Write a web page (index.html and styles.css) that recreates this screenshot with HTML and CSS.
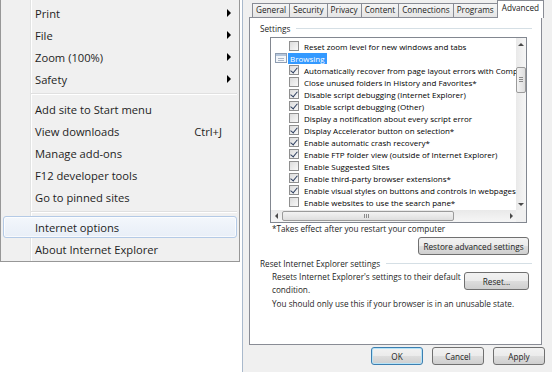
FILE: index.html
```html
<!DOCTYPE html>
<html lang="en">
<head>
  <meta charset="UTF-8" />
  <meta name="viewport" content="width=device-width, initial-scale=1.0" />
  <title>Internet Options</title>
  <link rel="stylesheet" href="styles.css">
</head>
<body>
  <div class="screen">
    <div class="menu-side">
      <ul class="menu">
        <li class="item sub">Print</li>
        <li class="item sub">File</li>
        <li class="item sub">Zoom (100%)</li>
        <li class="item sub">Safety</li>
        <li class="sep"></li>
        <li class="item">Add site to Start menu</li>
        <li class="item">View downloads <span class="key">Ctrl+J</span></li>
        <li class="item">Manage add-ons</li>
        <li class="item">F12 developer tools</li>
        <li class="item">Go to pinned sites</li>
        <li class="sep"></li>
        <li class="item hot">Internet options</li>
        <li class="item">About Internet Explorer</li>
      </ul>
    </div>

    <div class="dialog">
      <div class="tabs">
        <span class="tab">General</span>
        <span class="tab">Security</span>
        <span class="tab">Privacy</span>
        <span class="tab">Content</span>
        <span class="tab">Connections</span>
        <span class="tab">Programs</span>
        <span class="tab active">Advanced</span>
      </div>

      <div class="panel">
        <div class="group-title">Settings</div>

        <div class="listbox">
          <div class="rows">
            <div class="row"><span class="cb"></span>Reset zoom level for new windows and tabs</div>
            <div class="row cat">
              <svg class="cat-icon" width="12" height="10" viewBox="0 0 12 10">
                <rect x="0.5" y="0.5" width="11" height="9" fill="#f3f6fa" stroke="#8d9cb1"/>
                <rect x="1" y="1" width="10" height="2" fill="#b3c5db"/>
                <path d="M3 5.5h6M3 7.5h6" stroke="#a9b6c7"/>
              </svg>
              <span class="cat-label">Browsing</span>
            </div>
            <div class="row"><span class="cb on"></span>Automatically recover from page layout errors with Compa</div>
            <div class="row"><span class="cb"></span>Close unused folders in History and Favorites*</div>
            <div class="row"><span class="cb on"></span>Disable script debugging (Internet Explorer)</div>
            <div class="row"><span class="cb on"></span>Disable script debugging (Other)</div>
            <div class="row"><span class="cb"></span>Display a notification about every script error</div>
            <div class="row"><span class="cb on"></span>Display Accelerator button on selection*</div>
            <div class="row"><span class="cb on"></span>Enable automatic crash recovery*</div>
            <div class="row"><span class="cb on"></span>Enable FTP folder view (outside of Internet Explorer)</div>
            <div class="row"><span class="cb"></span>Enable Suggested Sites</div>
            <div class="row"><span class="cb on"></span>Enable third-party browser extensions*</div>
            <div class="row"><span class="cb on"></span>Enable visual styles on buttons and controls in webpages</div>
            <div class="row"><span class="cb"></span>Enable websites to use the search pane*</div>
          </div>
          <div class="vscroll">
            <span class="arrow up"></span>
            <span class="vthumb"></span>
            <span class="arrow down"></span>
          </div>
          <div class="hscroll">
            <span class="arrow left"></span>
            <span class="hthumb"></span>
            <span class="arrow right"></span>
          </div>
          <div class="corner"></div>
        </div>

        <p class="note">*Takes effect after you restart your computer</p>
        <div class="actions">
          <button class="btn restore">Restore advanced settings</button>
        </div>

        <div class="group-title reset-title">Reset Internet Explorer settings</div>
        <div class="reset-row">
          <p>Resets Internet Explorer's settings to their default<br>condition.</p>
          <button class="btn reset">Reset...</button>
        </div>
        <p class="note warn">You should only use this if your browser is in an unusable state.</p>
      </div>

      <div class="buttons">
        <button class="btn default">OK</button>
        <button class="btn">Cancel</button>
        <button class="btn">Apply</button>
      </div>
    </div>
  </div>
</body>
</html>
```

FILE: styles.css
```css
* {
  box-sizing: border-box;
}
body {
  margin: 0;
  font-family: "Open Sans", "Noto Sans", sans-serif;
  color: #000000;
}
.screen {
  display: flex;
  width: 552px;
  height: 372px;
  overflow: hidden;
  background-color: #ffffff;
}

/* context menu */
.menu-side {
  width: 242px;
  flex-shrink: 0;
  background-color: #ffffff;
}
.menu {
  list-style: none;
  margin: 0;
  padding: 2px 0 1px;
  width: 240px;
  border: 1px solid #979797;
  border-top: none;
  background: linear-gradient(to right, transparent 29px, #e2e3e3 29px, #e2e3e3 30px, #ffffff 30px, #ffffff 31px, transparent 31px), #f0f0f0;
  font-size: 11.2px;
  color: #1e1e1e;
}
.item {
  display: flex;
  align-items: center;
  height: 22px;
  margin: 0 2px;
  padding: 0 5px 0 31px;
  border: 1px solid transparent;
  border-radius: 3px;
}
.item.sub::after {
  content: "";
  margin-left: auto;
  border-left: 4px solid #000000;
  border-top: 4px solid transparent;
  border-bottom: 4px solid transparent;
}
.key {
  margin-left: auto;
  margin-right: 9px;
}
.item.hot {
  background: linear-gradient(#f3f7fc, #e8eef7);
  border-color: #b4cae6;
  box-shadow: inset 0 0 0 1px rgba(255, 255, 255, 0.7);
}
.sep {
  height: 8px;
  padding-top: 3px;
  margin: 0 2px 0 30px;
}
.sep::before {
  content: "";
  display: block;
  border-top: 1px solid #e0e0e0;
  border-bottom: 1px solid #ffffff;
}

/* dialog */
.dialog {
  flex: 1;
  min-width: 0;
  overflow: hidden;
  display: flex;
  flex-direction: column;
  padding: 0 7px 0 6px;
  border-left: 1px solid #a9b9cc;
  background-color: #f0f0f0;
  font-size: 8.2px;
}
.tabs {
  display: flex;
  align-items: flex-end;
  height: 17px;
  padding-left: 3px;
}
.tab {
  height: 14px;
  padding: 0 3px;
  margin-right: -1px;
  border: 1px solid #898c95;
  border-bottom: none;
  background: linear-gradient(#f5f5f5, #e5e5e5);
  line-height: 12px;
  color: #222222;
  white-space: nowrap;
}
.tab.active {
  position: relative;
  z-index: 1;
  height: 18px;
  margin-bottom: -1px;
  padding: 0 4px;
  background: #ffffff;
  line-height: 14px;
}
.panel {
  height: 328px;
  margin-right: 3px;
  border: 1px solid #898c95;
  background-color: #ffffff;
}
.group-title {
  display: flex;
  align-items: center;
  height: 12px;
  margin: 4px 9px 0 10px;
  color: #1e1e1e;
}
.group-title::after {
  content: "";
  flex: 1;
  margin-left: 6px;
  border-top: 1px solid #d5dfe5;
}
.reset-title {
  margin-top: 2px;
}

/* settings list */
.listbox {
  display: grid;
  grid-template-columns: 1fr 10px;
  grid-template-rows: 1fr 12px;
  width: 257px;
  height: 186px;
  margin: 3px 0 0 20px;
  border: 1px solid #828790;
}
.rows {
  overflow: hidden;
  padding-top: 2px;
  font-size: 8px;
}
.row {
  display: flex;
  align-items: center;
  height: 12px;
  padding-left: 18px;
  white-space: nowrap;
}
.cb {
  display: flex;
  align-items: center;
  justify-content: center;
  flex-shrink: 0;
  width: 10px;
  height: 10px;
  margin-right: 5px;
  border: 1px solid #8f8f8f;
  background: linear-gradient(135deg, #dcdcdc, #f8f8f8);
}
.cb.on::after {
  content: "";
  width: 3px;
  height: 6px;
  margin-top: -2px;
  border: solid #2d3f60;
  border-width: 0 1.5px 1.5px 0;
  transform: rotate(40deg);
}
.row.cat {
  padding-left: 4px;
}
.cat-icon {
  margin-right: 1px;
}
.cat-label {
  padding: 0 2px;
  line-height: 11px;
  background-color: #3399ff;
  color: #ffffff;
}
.vscroll {
  display: flex;
  flex-direction: column;
  background: linear-gradient(to right, #e9e9e9, #f6f6f6);
}
.hscroll {
  display: flex;
  align-items: center;
  background: linear-gradient(#e9e9e9, #f6f6f6);
}
.corner {
  background-color: #f0f0f0;
}
.arrow {
  display: flex;
  align-items: center;
  justify-content: center;
  width: 10px;
  height: 12px;
  flex-shrink: 0;
}
.arrow::before {
  content: "";
  border: 3px solid transparent;
}
.arrow.up::before {
  border-bottom: 3px solid #4a4a4a;
  margin-top: -3px;
}
.arrow.down::before {
  border-top: 3px solid #4a4a4a;
  margin-bottom: -3px;
}
.arrow.left::before {
  border-right: 3px solid #4a4a4a;
  margin-left: -3px;
}
.arrow.right::before {
  border-left: 3px solid #4a4a4a;
  margin-right: -3px;
}
.arrow.down {
  margin-top: auto;
}
.arrow.right {
  margin-left: auto;
}
.vthumb {
  height: 26px;
  margin: 17px 0 0 0;
  border: 1px solid #9b9b9b;
  border-radius: 2px;
  background-image: linear-gradient(#8a8a8a, #8a8a8a), linear-gradient(#8a8a8a, #8a8a8a), linear-gradient(#8a8a8a, #8a8a8a), linear-gradient(to right, #f3f3f3, #dedede);
  background-size: 4px 1px, 4px 1px, 4px 1px, 100% 100%;
  background-position: 2px 9px, 2px 11px, 2px 13px, 0 0;
  background-repeat: no-repeat;
}
.hthumb {
  width: 172px;
  height: 10px;
  margin-left: 1px;
  border: 1px solid #9b9b9b;
  border-radius: 2px;
  background-image: linear-gradient(#8a8a8a, #8a8a8a), linear-gradient(#8a8a8a, #8a8a8a), linear-gradient(#8a8a8a, #8a8a8a), linear-gradient(#f3f3f3, #dedede);
  background-size: 1px 4px, 1px 4px, 1px 4px, 100% 100%;
  background-position: 81px 2px, 83px 2px, 85px 2px, 0 0;
  background-repeat: no-repeat;
}

/* texts and buttons */
.note {
  height: 12px;
  margin: 0 0 0 22px;
  line-height: 12px;
  color: #1e1e1e;
}
.actions {
  display: flex;
  justify-content: flex-end;
  margin: 2px 12px 0 0;
}
.btn {
  height: 18px;
  padding: 0;
  border: 1px solid #707070;
  border-radius: 3px;
  background: linear-gradient(#f2f2f2 0, #ebebeb 50%, #dddddd 51%, #cfcfcf 100%);
  font-family: inherit;
  font-size: 8.2px;
  color: #1e1e1e;
  white-space: nowrap;
}
.restore {
  width: 111px;
}
.reset-row {
  display: flex;
  justify-content: space-between;
  margin: 1px 12px 0 22px;
}
.reset-row p {
  margin: 0;
  line-height: 13px;
  white-space: nowrap;
  color: #1e1e1e;
}
.reset {
  width: 65px;
  margin-top: 2px;
}
.warn {
  margin-top: 2px;
}
.buttons {
  display: flex;
  justify-content: flex-end;
  gap: 9px;
  margin-top: 2px;
}
.buttons .btn {
  width: 52px;
}
.btn.default {
  border-color: #3c7fb1;
  box-shadow: inset 0 0 0 1px #b7e3f7;
}
```
